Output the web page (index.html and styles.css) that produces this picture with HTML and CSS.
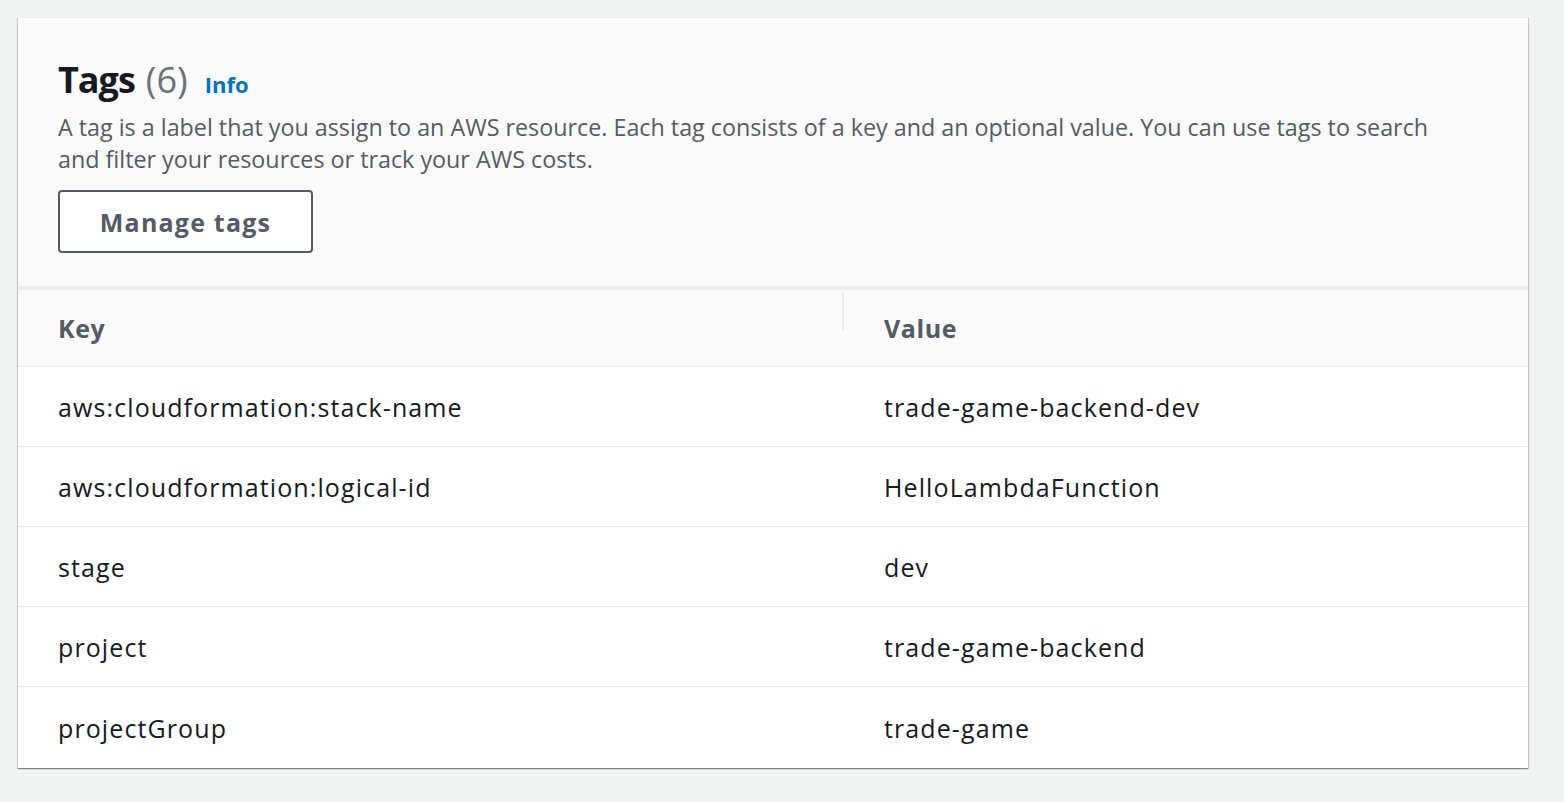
FILE: index.html
```html
<!DOCTYPE html>
<html lang="en">
<head>
<meta charset="utf-8">
<title>Tags</title>
<link rel="stylesheet" href="styles.css">
</head>
<body>
<div class="card">
  <div class="card-header">
    <h2 class="title"><span class="name">Tags</span><span class="count">(6)</span><a class="info" href="#">Info</a></h2>
    <p class="desc">A tag is a label that you assign to an AWS resource. Each tag consists of a key and an optional value. You can use tags to search and filter your resources or track your AWS costs.</p>
    <button class="btn">Manage tags</button>
  </div>
  <div class="table">
    <div class="row head">
      <div class="cell key">Key</div>
      <div class="cell val">Value</div>
    </div>
    <div class="row">
      <div class="cell key">aws:cloudformation:stack-name</div>
      <div class="cell val">trade-game-backend-dev</div>
    </div>
    <div class="row">
      <div class="cell key">aws:cloudformation:logical-id</div>
      <div class="cell val">HelloLambdaFunction</div>
    </div>
    <div class="row">
      <div class="cell key">stage</div>
      <div class="cell val">dev</div>
    </div>
    <div class="row">
      <div class="cell key">project</div>
      <div class="cell val">trade-game-backend</div>
    </div>
    <div class="row last">
      <div class="cell key">projectGroup</div>
      <div class="cell val">trade-game</div>
    </div>
  </div>
</div>
</body>
</html>
```
FILE: styles.css
```css
* { box-sizing: border-box; }
html, body { margin: 0; padding: 0; }
body {
  background: #f2f3f3;
  font-family: "Open Sans", "Liberation Sans", sans-serif;
  color: #16191f;
  padding: 17px 0 0 18px;
  height: 802px;
}
.card {
  width: 1510px;
  background: #fff;
  border-top: 1px solid #eaeded;
  box-shadow: 0 1px 1px 0 rgba(0,28,36,.3), 1px 1px 1px 0 rgba(0,28,36,.15), -1px 1px 1px 0 rgba(0,28,36,.15);
}
.card-header {
  background: #fafafa;
  padding: 40px 40px 33px 40px;
  border-bottom: 4px solid #eaeded;
}
.title {
  margin: 0;
  height: 44px;
  font-size: 36px;
  line-height: 44px;
  font-weight: 700;
  color: #16191f;
  display: flex;
  align-items: baseline;
}
.name { letter-spacing: -1px; }
.count {
  font-weight: 400;
  color: #687078;
  margin-left: 11px;
}
.info {
  font-size: 22px;
  line-height: 24px;
  font-weight: 700;
  color: #0073bb;
  text-decoration: none;
  margin-left: 17px;
}
.desc {
  margin: 9px 0 15px;
  font-size: 23.3px;
  line-height: 32px;
  color: #545b64;
  max-width: 1390px;
}
.btn {
  display: block;
  width: 255px;
  height: 63px;
  border: 2px solid #545b64;
  border-radius: 4px;
  background: #fff;
  font-family: inherit;
  font-size: 25px;
  letter-spacing: 1.2px;
  font-weight: 700;
  color: #545b64;
  padding: 0;
}
.row {
  display: grid;
  grid-template-columns: 826px 1fr;
  height: 80px;
  border-bottom: 1px solid #eaeded;
  align-items: center;
  font-size: 25px;
  letter-spacing: 1.1px;
}
.row.last { border-bottom: none; height: 81px; }
.row.head {
  background: #fafafa;
  height: 77px;
  font-weight: 700;
  color: #545b64;
  letter-spacing: 0.6px;
}
.cell { padding-left: 40px; }
.head .val { position: relative; }
.head .val::before {
  content: "";
  position: absolute;
  left: -2px;
  top: -19px;
  height: 38px;
  width: 2px;
  background: #eaeded;
}
```
